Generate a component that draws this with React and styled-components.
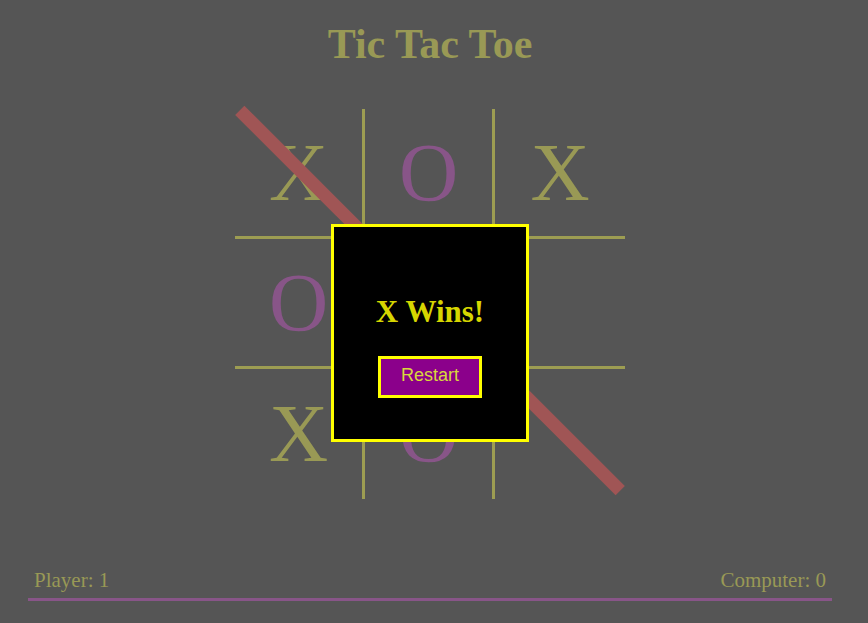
import React from "react";
import styled, { createGlobalStyle } from "styled-components";

const GlobalStyle = createGlobalStyle`
  html, body {
    margin: 0;
    padding: 0;
    background: #555555;
  }
  body {
    font-family: "Liberation Serif", "Times New Roman", serif;
  }
`;

const Page = styled.div`
  width: 860px;
  min-height: 623px;
  display: flex;
  flex-direction: column;
`;

const Title = styled.h1`
  margin: 0;
  padding-top: 21px;
  font-size: 42px;
  line-height: 46px;
  font-weight: bold;
  text-align: center;
  color: #999955;
`;

const Board = styled.div`
  position: relative;
  width: 390px;
  margin: 42px auto 0;
  display: grid;
  grid-template-columns: repeat(3, 130px);
  grid-template-rows: repeat(3, 130px);
`;

const Cell = styled.div`
  box-sizing: border-box;
  display: flex;
  align-items: center;
  justify-content: center;
  font-size: 82px;
  line-height: 1;
  color: ${(p) => (p.$mark === "O" ? "#885588" : "#999955")};
  border-right: ${(p) => (p.$right ? "3px solid #9d9d52" : "none")};
  border-bottom: ${(p) => (p.$bottom ? "3px solid #9d9d52" : "none")};
`;

const StrikeLine = styled.div`
  position: absolute;
  left: -74px;
  top: 185px;
  width: 538px;
  height: 13px;
  background: #a05555;
  transform: rotate(45deg);
`;

const Modal = styled.div`
  position: absolute;
  left: 96px;
  top: 115px;
  box-sizing: border-box;
  width: 198px;
  height: 218px;
  background: #000000;
  border: 3px solid #ffff00;
  display: flex;
  flex-direction: column;
  align-items: center;
  padding-top: 67px;
`;

const WinText = styled.h2`
  margin: 0;
  font-size: 31px;
  line-height: 36px;
  font-weight: bold;
  color: #d6d600;
`;

const RestartButton = styled.button`
  margin-top: 26px;
  box-sizing: border-box;
  width: 104px;
  height: 42px;
  background: #8b008b;
  border: 3px solid #ffff00;
  color: #d8d83c;
  font-family: "Liberation Sans", Arial, sans-serif;
  font-size: 18px;
  padding: 0 0 4px;
  cursor: pointer;
`;

const Footer = styled.div`
  margin: 69px 28px 0;
  padding: 0 6px 6px;
  display: flex;
  justify-content: space-between;
  border-bottom: 3px solid #885588;
  font-size: 21px;
  line-height: 24px;
  color: #999955;
`;

const cells = ["X", "O", "X", "O", "X", "", "X", "O", ""];

export default function App() {
  return (
    <Page>
      <GlobalStyle />
      <Title>Tic Tac Toe</Title>
      <Board>
        {cells.map((m, i) => (
          <Cell key={i} $mark={m} $right={i % 3 < 2} $bottom={i < 6}>
            {m}
          </Cell>
        ))}
        <StrikeLine />
        <Modal>
          <WinText>X Wins!</WinText>
          <RestartButton>Restart</RestartButton>
        </Modal>
      </Board>
      <Footer>
        <span>Player: 1</span>
        <span>Computer: 0</span>
      </Footer>
    </Page>
  );
}
